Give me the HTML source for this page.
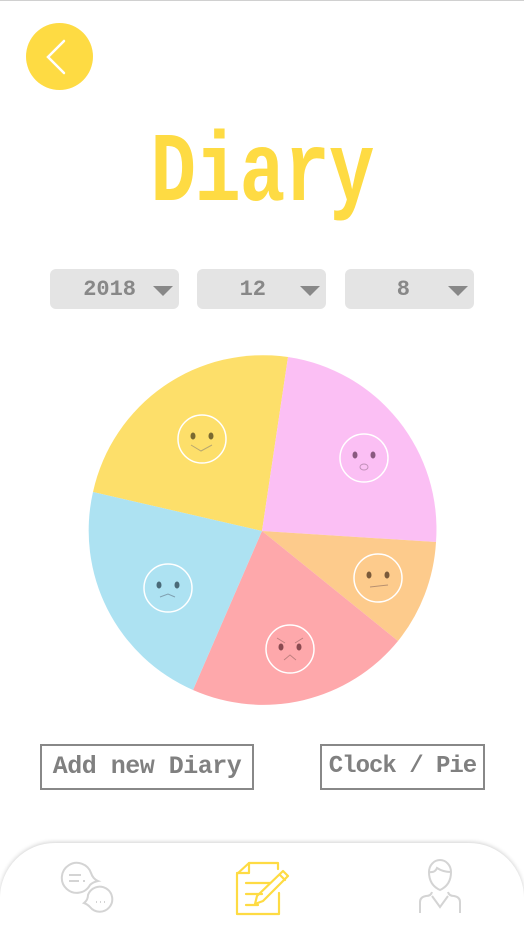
<!DOCTYPE html>
<html><head><meta charset="utf-8"><style>
*{margin:0;padding:0;box-sizing:border-box}
html,body{width:524px;height:934px;overflow:hidden}
body{background:#fff;position:relative;font-family:"Liberation Mono",monospace}
.top{position:absolute;left:0;top:0;width:524px;height:1px;background:#d0d0d0}
.back{position:absolute;left:26px;top:23px;width:67px;height:67px;border-radius:50%;background:#fedb43}
.title{position:absolute;left:0;width:524px;top:118px;text-align:center;color:#fedb43;font-weight:bold;font-size:76px;letter-spacing:-1px;transform:scaleY(1.3);transform-origin:top}
.dd{position:absolute;top:269px;width:129px;height:40px;border-radius:6px;background:#e4e4e4;color:#888;font-weight:bold;font-size:22px;line-height:42px}
.dd span{position:absolute;right:60px}
.dd i{position:absolute;right:6px;top:17px;width:0;height:0;border-left:10px solid transparent;border-right:10px solid transparent;border-top:10px solid #888}
.btn{position:absolute;top:744px;height:46px;border:2px solid #888;color:#808080;font-weight:bold;font-size:24px;line-height:42px;text-align:center;white-space:nowrap;letter-spacing:-1px}
.nav{position:absolute;left:0;top:843px;width:524px;height:91px;background:#fff;border-radius:55px 55px 0 0;box-shadow:0 -1px 4px rgba(0,0,0,.18)}
</style></head><body>
<div class="top"></div>
<div class="back"><svg width="67" height="67"><path d="M38 18 L22 34 L38 50" fill="none" stroke="#fff" stroke-width="2.5" stroke-linecap="round"/></svg></div>
<div class="title">Diary</div>
<div class="dd" style="left:50px"><span style="right:43px">2018</span><i></i></div>
<div class="dd" style="left:197px"><span>12</span><i></i></div>
<div class="dd" style="left:345px"><span style="right:64px">8</span><i></i></div>
<svg style="position:absolute;left:0;top:0" width="524" height="934">
<path d="M262 531 L93 492 A174 174 0 0 1 288 357 Z" fill="#fddf6a"/>
<path d="M262 531 L288 357 A174 174 0 0 1 436 542 Z" fill="#fbbff4"/>
<path d="M262 531 L436 542 A174 174 0 0 1 398 641 Z" fill="#fdcb8c"/>
<path d="M262 531 L398 641 A174 174 0 0 1 193 690 Z" fill="#fea8ab"/>
<path d="M262 531 L193 690 A174 174 0 0 1 93 492 Z" fill="#ade2f2"/>
<g fill="none" stroke="#fff" stroke-width="1.5">
<circle cx="202" cy="439" r="24"/><circle cx="364" cy="458" r="24"/><circle cx="378" cy="578" r="24"/><circle cx="290" cy="649" r="24"/><circle cx="168" cy="588" r="24"/>
</g>
<g fill="#7a6a30"><ellipse cx="193" cy="436" rx="2.5" ry="3.5"/><ellipse cx="211" cy="436" rx="2.5" ry="3.5"/></g>
<path d="M191 445 L201 451 L212 445" fill="none" stroke="#b8a870" stroke-width="1"/>
<g fill="#8a5a80"><ellipse cx="355" cy="455" rx="2.5" ry="3.5"/><ellipse cx="373" cy="455" rx="2.5" ry="3.5"/></g>
<ellipse cx="364" cy="467" rx="4" ry="3" fill="none" stroke="#c090b8" stroke-width="1"/>
<g fill="#7a5a3a"><ellipse cx="369" cy="575" rx="2.5" ry="3.5"/><ellipse cx="387" cy="575" rx="2.5" ry="3.5"/></g>
<path d="M370 587 L388 585" stroke="#b89070" stroke-width="1"/>
<g fill="#8a4a50"><ellipse cx="281" cy="647" rx="2.5" ry="3.5"/><ellipse cx="299" cy="647" rx="2.5" ry="3.5"/></g>
<path d="M277 638 L285 643 M303 638 L295 643 M284 660 L290 655 L296 660" fill="none" stroke="#c08080" stroke-width="1"/>
<g fill="#4a6a78"><ellipse cx="159" cy="585" rx="2.5" ry="3.5"/><ellipse cx="177" cy="585" rx="2.5" ry="3.5"/></g>
<path d="M160 597 L168 594 L175 597" fill="none" stroke="#80a0b0" stroke-width="1"/>
</svg>
<div class="btn" style="left:40px;width:214px;font-size:25px;letter-spacing:-0.5px">Add new Diary</div>
<div class="btn" style="left:320px;width:165px">Clock / Pie</div>
<div class="nav"></div>
<svg style="position:absolute;left:0;top:0" width="524" height="934">
<g fill="none" stroke="#d4d4d4" stroke-width="2">
<path d="M91 873 A15 15 0 1 0 90 885 Q93 882 98 881 Q93 879 91 873 Z"/>
<path d="M69 875 H81 M69 881 H79 M83 881 H85"/>
<path d="M88 895 A12.5 12.5 0 1 1 90 907 Q87 904 84 903 Q88 900 88 895 Z"/>
<path d="M96 902 h1 M100 902 h1 M104 902 h1"/>
<path d="M420 913 V902 Q420 897 426 896 Q431 896 432 892 M460 913 V902 Q460 897 454 896 Q449 896 448 892 M432 896 L440 907 L448 896"/>
<path d="M429 872 A11 12 0 1 1 451 872 Q451 885 440 890 Q429 885 429 872 Z M429 872 Q435 873 437 868 Q443 872 451 872"/>
</g>
<g fill="none" stroke="#fedb43" stroke-width="2.2" stroke-linejoin="round" stroke-linecap="round">
<path d="M278 869 V863 H249 L237 874 V914 H279 V893"/>
<path d="M249 863 V873 H237"/>
<path d="M246 883 H270 M246 894 H262 M246 905 H258"/>
<path d="M283 871 L288 876 L263 901 L255 904 L257 896 Z M280 875 L285 880"/>
</g>
</svg>
</body></html>
